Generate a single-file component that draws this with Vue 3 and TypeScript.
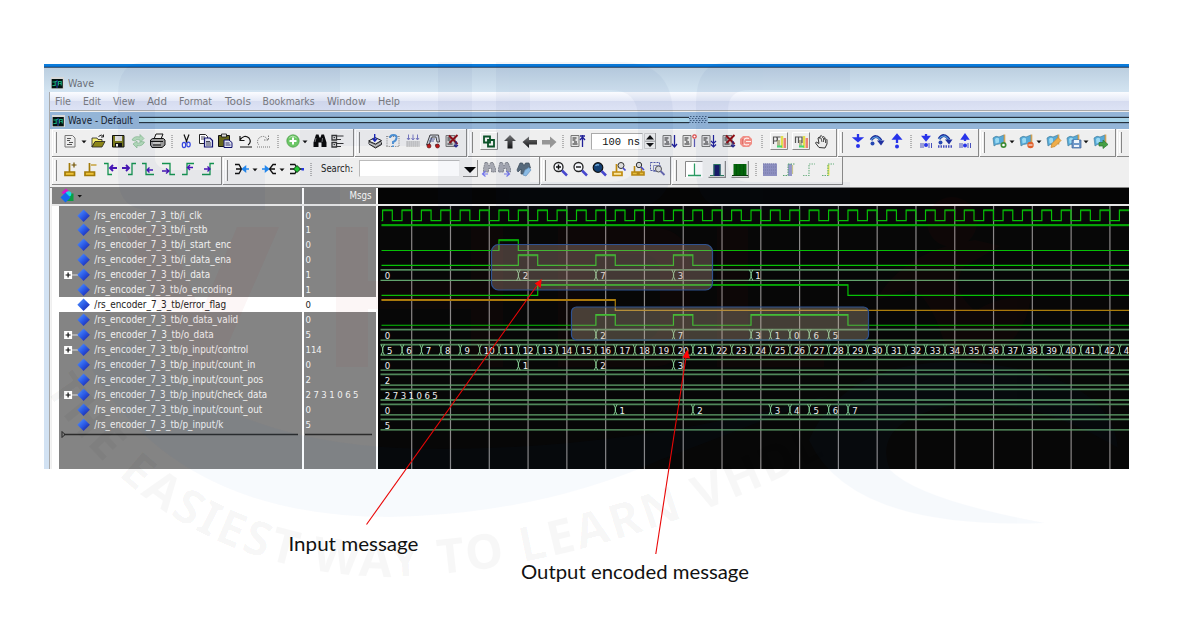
<script setup lang="ts">
interface Tool { icon: string; c: number; w?: number }
interface Group { start: number; end: number; tools: Tool[] }
interface Change { at: number; v: string }
interface Signal {
  name: string
  nameWidth: number
  value: string
  expand?: boolean
  selected?: boolean
  kind: 'bit' | 'bus'
  color?: string
  level?: number
  toggles?: number[]
  first?: string
  changes?: Change[]
}

const t = (icon: string, c: number, w?: number): Tool => ({ icon, c, w })
const row1: Group[] = [
  { start: 52, end: 354, tools: [t('doc', 70), t('caret', 84, 6), t('open', 98), t('save', 118), t('refresh', 137.5), t('print', 157), t('sep', 172, 4), t('cut', 186), t('copy', 206), t('paste', 225), t('undo', 244.5), t('redo', 263), t('sep', 278, 4), t('plus', 292.5), t('caret', 305, 6), t('find', 319.5), t('tree', 338)] },
  { start: 355, end: 467, tools: [t('stack', 374.5), t('ask', 393), t('rain', 413), t('car', 432.5), t('docx', 452)] },
  { start: 468, end: 837, tools: [t('link', 489), t('up', 510), t('left', 529.5), t('right', 549), t('sep', 563, 4), t('docup', 578), t('time', 617, 52), t('spin', 650, 12), t('docdown', 670), t('doccirc', 689.5), t('docdd', 709), t('docx', 729), t('stop', 746), t('sep', 762, 4), t('profp', 779), t('profm', 801), t('hand', 822)] },
  { start: 838, end: 978.5, tools: [t('stepin', 858), t('stepover', 876.5), t('stepout', 897), t('sep', 911, 4), t('stepin2', 926), t('stepover2', 945), t('stepout2', 964.5)] },
  { start: 979.5, end: 1115.5, tools: [t('bmadd', 999.5), t('caret', 1012, 6), t('bmdel', 1027), t('caret', 1039, 6), t('bmedit', 1054), t('bmsave', 1074), t('caret', 1086, 6), t('bmgo', 1101)] },
  { start: 1116.5, end: 1134, tools: [] },
]
const row2: Group[] = [
  { start: 52, end: 222, tools: [t('curadd', 71), t('curdel', 90.5), t('edgeprev', 111), t('edgenext', 129), t('fallprev', 149), t('fallnext', 168), t('riseprev', 188), t('risenext', 207.5)] },
  { start: 223, end: 539.5, tools: [t('drv', 242), t('caret', 255, 6), t('rdr', 269), t('caret', 282, 6), t('con', 297), t('sep', 311, 4), t('label', 338, 34), t('search', 409.5, 101), t('drop', 470.5, 15), t('findl', 488), t('findr', 504), t('findo', 524)] },
  { start: 540.5, end: 671, tools: [t('zin', 560), t('zout', 580), t('zfull', 599), t('zcur', 619), t('zcurs', 638), t('zrange', 657)] },
  { start: 672, end: 843, tools: [t('w1', 693.5), t('w2', 717), t('w3', 740), t('sep', 756, 4), t('w4', 770), t('w5', 789.5), t('w6', 808.5), t('w7', 828)] },
]
const toolbars = [row1, row2]
const width = (x: Tool) => x.w ?? 18
function toolStyle(g: Group, i: number) {
  const x = g.tools[i]
  const prev = i ? g.tools[i - 1].c + width(g.tools[i - 1]) / 2 : g.start
  return { width: width(x) + 'px', marginLeft: x.c - width(x) / 2 - prev + 'px' }
}

const menus: [string, number, number][] = [
  ['File', 55, 16], ['Edit', 83, 18], ['View', 113, 22], ['Add', 147, 20], ['Format', 179, 33],
  ['Tools', 225, 26], ['Bookmarks', 262.5, 52], ['Window', 327, 39], ['Help', 378, 22],
]

const p = '/rs_encoder_7_3_tb/'
const ch = (...a: [number, string][]): Change[] => a.map(([at, v]) => ({ at, v }))
const signals: Signal[] = [
  { name: p + 'i_clk', nameWidth: 107.5, value: '0', kind: 'bit', level: 0, toggles: Array.from({ length: 77 }, (_, i) => 5 + i / 2) },
  { name: p + 'i_rstb', nameWidth: 113, value: '1', kind: 'bit', level: 1, toggles: [] },
  { name: p + 'i_start_enc', nameWidth: 137, value: '0', kind: 'bit', level: 0, toggles: [11, 12] },
  { name: p + 'i_data_ena', nameWidth: 137, value: '0', kind: 'bit', level: 0, toggles: [12, 13, 16, 17, 20, 21] },
  { name: p + 'i_data', nameWidth: 116, value: '1', expand: true, kind: 'bus', first: '0', changes: ch([12, '2'], [16, '7'], [20, '3'], [24, '1']) },
  { name: p + 'o_encoding', nameWidth: 138, value: '1', kind: 'bit', level: 0, toggles: [13, 29] },
  { name: p + 'error_flag', nameWidth: 132, value: '0', selected: true, kind: 'bit', color: '#ab7d0c', level: 1, toggles: [17] },
  { name: p + 'o_data_valid', nameWidth: 144, value: '0', kind: 'bit', level: 0, toggles: [16, 17, 20, 21, 24, 29] },
  { name: p + 'o_data', nameWidth: 119.5, value: '5', expand: true, kind: 'bus', first: '0', changes: ch([16, '2'], [20, '7'], [24, '3'], [25, '1'], [26, '0'], [27, '6'], [28, '5']) },
  { name: p + 'p_input/control', nameWidth: 154, value: '114', expand: true, kind: 'bus', changes: Array.from({ length: 39 }, (_, i) => ({ at: 5 + i, v: i === 38 ? '4' : String(5 + i) })) },
  { name: p + 'p_input/count_in', nameWidth: 161, value: '0', kind: 'bus', first: '0', changes: ch([12, '1'], [16, '2'], [20, '3']) },
  { name: p + 'p_input/count_pos', nameWidth: 169, value: '2', kind: 'bus', first: '2', changes: [] },
  { name: p + 'p_input/check_data', nameWidth: 173, value: '2 7 3 1 0 6 5', expand: true, kind: 'bus', first: '2 7 3 1 0 6 5', changes: [] },
  { name: p + 'p_input/count_out', nameWidth: 168, value: '0', kind: 'bus', first: '0', changes: ch([17, '1'], [21, '2'], [25, '3'], [26, '4'], [27, '5'], [28, '6'], [29, '7']) },
  { name: p + 'p_input/k', nameWidth: 129, value: '5', kind: 'bus', first: '5', changes: [] },
]

const PITCH = 14.95
const END = 751
const slot = (n: number) => 4.6 + (n - 5) * 19.39
const top = (i: number) => i * PITCH + 4
const low = (i: number) => top(i) + 10.6
const grid = Array.from({ length: 19 }, (_, i) => 33.7 + i * 38.79)

function bitPath(s: Signal, i: number): string {
  let high = s.level === 1
  const y = () => (high ? top(i) : low(i))
  let d = `M3.5 ${y()}`
  for (const at of s.toggles ?? []) {
    d += `H${slot(at)}`
    high = !high
    d += `V${y()}`
  }
  return d + `H${END}`
}
function highPath(s: Signal, i: number): string {
  let high = s.level === 1
  let from = 3.5
  let d = ''
  for (const at of [...(s.toggles ?? []), 100]) {
    const to = Math.min(END, slot(at))
    if (high) d += `M${from} ${top(i) + 0.6}H${to}`
    from = to
    high = !high
  }
  return d
}
function crossPath(s: Signal, i: number): string {
  const a = top(i)
  const b = low(i)
  return (s.changes ?? [])
    .map(({ at }) => {
      const x = slot(at)
      return `M${x - 1.6} ${a}L${x} ${a + 3.5}V${b - 3.5}L${x - 1.6} ${b}M${x + 1.8} ${a}L${x + 0.2} ${a + 3.5}V${b - 3.5}L${x + 1.8} ${b}`
    })
    .join('')
}
</script>

<template>
  <div class="page">
    <svg class="defs" width="0" height="0">
      <defs>
        <linearGradient id="gem" x1="0" y1="0" x2="1" y2="1">
          <stop offset="0" stop-color="#5b9bff" /><stop offset=".5" stop-color="#2a5be8" /><stop offset="1" stop-color="#1c1c98" />
        </linearGradient>
        <linearGradient id="dark" x1="0" y1="0" x2="0" y2="1">
          <stop offset="0" stop-color="#777" /><stop offset="1" stop-color="#111" />
        </linearGradient>
        <symbol id="wave" viewBox="0 0 14 12" preserveAspectRatio="none"><rect width="14" height="12" fill="#d8d8d8" /><rect x=".7" y="2" width="12" height="9.3" fill="#03120f" /><path d="M1.5 8.5h3v-4h2M1.500 5h2.500M8 8.500V4.500h3v4M9 6.500h2" fill="none" stroke="#18a878" stroke-width="1.200" /><path d="M6.500 3v8" stroke="#2a48b0" /></symbol>
        <symbol id="page" viewBox="0 0 18 18"><path d="M4 3.500h8v11H4z" fill="#e4e4e4" stroke="#777" /><path d="M5.500 6h4M5.500 8h3M7 10h3M5.500 12h5" stroke="#222" /></symbol>
        <symbol id="doc" viewBox="0 0 18 18"><path d="M4 3.500h7.500l2.500 2.500v9H4z" fill="#eee" stroke="#777" /><path d="M6 6.500h4M6 8.500h3M8 10.500h4M6 12.500h5" stroke="#555" /></symbol>
        <symbol id="open" viewBox="0 0 18 18"><path d="M3 6h5l1 1.500h4V10H6l-3 5z" fill="#f6ef72" stroke="#222" stroke-width=".8" /><path d="M3 15l3-5.500h10L13 15z" fill="#8c8618" stroke="#222" stroke-width=".8" /><path d="M9.500 4.500q3-3 5 0m0-2v2.500h-2.500" fill="none" stroke="#222" /></symbol>
        <symbol id="save" viewBox="0 0 18 18"><path d="M3.500 3.500h11.500v11.500H3.500z" fill="#77771c" stroke="#111" /><path d="M6 4h7v5H6z" fill="#ddd" /><path d="M6 11h7v4H6z" fill="#111" /><path d="M7 12h2v2.500H7z" fill="#eee" /></symbol>
        <symbol id="refresh" viewBox="0 0 18 18"><path d="M3 8Q5 3.500 11 5V2.500l4 4-4 4V8Q7 6.500 6 9z" fill="#b6dcbb" stroke="#86ba91" stroke-width=".7" /><path d="M15.500 10Q13 15 8 13.500V16l-4-4 4-3v2Q11 12 12 9.500z" fill="#b6dcbb" stroke="#86ba91" stroke-width=".7" /></symbol>
        <symbol id="print" viewBox="0 0 18 18"><path d="M6 7l2-5h7l-2 5z" fill="#eee" stroke="#111" /><path d="M2.500 8l2-1.500h11L17 8v5l-3 2.500H4L2.500 13z" fill="#999" stroke="#111" /><path d="M3 9.500h12M5 13h8" stroke="#111" /><path d="M5 11h7" stroke="#eee" /></symbol>
        <symbol id="cut" viewBox="0 0 18 18"><path d="M7 2.500l3 8M12 2.500l-3 8" stroke="#111" fill="none" stroke-width="1.200" /><ellipse cx="7" cy="13" rx="1.700" ry="2.600" fill="none" stroke="#3546e0" stroke-width="1.200" /><ellipse cx="11.500" cy="12.500" rx="1.700" ry="2.400" fill="none" stroke="#3546e0" stroke-width="1.200" /></symbol>
        <symbol id="copy" viewBox="0 0 18 18"><path d="M2.500 2.500h6l2 2v7h-8z" fill="#fff" stroke="#222" /><path d="M7.500 6h5.500l2.500 2.500v6.500h-8z" fill="#dfe2f2" stroke="#11116e" stroke-width="1.200" /><path d="M4 5h4M4 7h3M9 9.500h4M9 11h5M9 13h5" stroke="#445" /></symbol>
        <symbol id="paste" viewBox="0 0 18 18"><path d="M2.500 3.500h11v11h-11z" fill="#66661c" stroke="#111" /><path d="M5.500 2h5v3h-5z" fill="#ddd" stroke="#111" stroke-width=".8" /><path d="M8 8h5l3 2.500v5H8z" fill="#dfe2f2" stroke="#11116e" /><path d="M9.500 11h4M9.500 13h5" stroke="#336" /></symbol>
        <symbol id="undo" viewBox="0 0 18 18"><path d="M4 4v4.500h4.500M4 8q4-6 9-2 3 4-1 7" fill="none" stroke="#111" stroke-width="1.200" /><path d="M4 15h12" stroke="#111" /></symbol>
        <symbol id="redo" viewBox="0 0 18 18"><path d="M14.500 3.500V8h-4.500M14 8q-4-6-9-2-3 4 0 7" fill="none" stroke="#777" stroke-dasharray="1.500 1" /><path d="M3 15h13" stroke="#777" stroke-dasharray="1 1" /></symbol>
        <symbol id="plus" viewBox="0 0 18 18"><circle cx="9" cy="9" r="6.200" fill="#6cc765" stroke="#489a45" stroke-width=".7" /><path d="M5.200 6q3.500-3.500 7.500 0" stroke="#b8e6b0" fill="none" /><path d="M9 5.500v7M5.500 9h7" stroke="#fff" stroke-width="2" /></symbol>
        <symbol id="find" viewBox="0 0 18 18"><path d="M5 2.500h2.500l1 3h1l1-3H13l2.500 8V15h-5v-4.500h-3V15h-5v-4.500z" fill="#0a0a0a" /><path d="M5 6l-1 4M11.500 6l-.5 4" stroke="#aaa" stroke-width=".7" /></symbol>
        <symbol id="tree" viewBox="0 0 18 18"><path d="M3 3.500h4.500v4.500H3zM3 10.500h4.500V15H3z" fill="none" stroke="#333" stroke-width="1.300" /><path d="M8 4h6.500M8 7.500h4M8 11.500h6.500M8 14.500h4" stroke="#333" stroke-width="1.200" /><path d="M4.500 5.700h1.500M4.500 12.700h1.500" stroke="#111" /></symbol>
        <symbol id="stack" viewBox="0 0 18 18"><path d="M3 12v-2l6-3 6.500 3v2.500L9.500 16z" fill="#888" stroke="#222" /><path d="M2.500 9L9 5.500l6.500 3L9.500 12z" fill="#f4f4f4" stroke="#222" /><path d="M3 11l6.500 3 6-3.500" stroke="#eee" fill="none" stroke-width=".8" /><path d="M8.700 2v7M6.500 6.500l2.300 2.700L11 6.500" stroke="#1b27b8" fill="none" stroke-width="1.400" /></symbol>
        <symbol id="ask" viewBox="0 0 18 18"><path d="M2.500 4.500h13M2.500 14.500h13M3 4v11M15 4v11" stroke="#777" stroke-dasharray="1 1.200" /><path d="M6 6q0-3 3.500-3t3 3-3.500 4v2M9 13.500V15" stroke="#4e92d5" fill="none" stroke-width="1.900" /></symbol>
        <symbol id="rain" viewBox="0 0 18 18"><path d="M4.500 2.500v5M9 2.500v5M13.500 2.500v5M3 6l1.500 2L6 6M7.500 6L9 8l1.500-2M12 6l1.500 2L15 6" stroke="#7778c0" fill="none" stroke-width="1" /><path d="M2.500 10h13M2.500 12h13M2.500 14h13" stroke="#777" stroke-dasharray="1.200 .8" /></symbol>
        <symbol id="car" viewBox="0 0 18 18"><path d="M6 3h8.500l1 7H13l-1-5H8l-3 8H2.500z" fill="#d4d8e0" stroke="#444" /><path d="M6 7h5M5 9h5" stroke="#5b67a0" /><path d="M3 13h3M11 13h4" stroke="#222" /><circle cx="5" cy="14" r="2" fill="#c01818" stroke="#511" stroke-width=".6" /><circle cx="13.500" cy="14" r="2" fill="#c01818" stroke="#511" stroke-width=".6" /></symbol>
        <symbol id="docx" viewBox="0 0 18 18"><path d="M3 3.500h9v11H3z" fill="#ccc" stroke="#777" /><path d="M4.500 6h4M4.500 8h3M6 10h3M4.500 12h5" stroke="#222" /><path d="M6 3.500l8.500 8.500M14.500 3L6.500 11" stroke="#8e0d14" stroke-width="1.900" /><path d="M13 9v6M11 13l2 2 2-2" stroke="#26268a" fill="none" stroke-width="1.200" /></symbol>
        <symbol id="link" viewBox="0 0 18 18"><path d="M.5 17.500V.5h17" fill="none" stroke="#fff" /><path d="M17.500.5v17H.5" fill="none" stroke="#888" /><path d="M4 4.500h6v6H4zM8 8h6v6.500H8z" fill="none" stroke="#0c5228" stroke-width="1.800" /></symbol>
        <symbol id="up" viewBox="0 0 18 18"><path d="M9 3l6 6h-3.500v7.500h-5V9H3z" fill="url(#dark)" /></symbol>
        <symbol id="left" viewBox="0 0 18 18"><path d="M1.500 10L8 4.500V8h8v4.500H8V16z" fill="url(#dark)" /></symbol>
        <symbol id="right" viewBox="0 0 18 18"><path d="M16.500 10L10 4.500V8H2v4.500h8V16z" fill="#969696" /></symbol>
        <symbol id="docup" viewBox="0 0 18 18"><use href="#page" x="-2" /><path d="M13.500 3v12M11 4h5M11 8l2.500-3L16 8" stroke="#202098" fill="none" stroke-width="1.300" /></symbol>
        <symbol id="docdown" viewBox="0 0 18 18"><use href="#page" x="-2" /><path d="M13.500 3v11M11 12l2.500 3 2.500-3" stroke="#202098" fill="none" stroke-width="1.300" /></symbol>
        <symbol id="doccirc" viewBox="0 0 18 18"><use href="#page" x="-2" /><path d="M13.500 7v8" stroke="#5a5ab0" stroke-width="1.300" /><circle cx="13.500" cy="4.500" r="1.700" fill="#fff" stroke="#d94343" stroke-width="1.200" /></symbol>
        <symbol id="docdd" viewBox="0 0 18 18"><use href="#page" x="-2" /><path d="M13.500 3v11M11 9l2.500 2.500L16 9M11 12.500l2.500 2.500 2.500-2.500" stroke="#202098" fill="none" stroke-width="1.200" /></symbol>
        <symbol id="stop" viewBox="0 0 18 18"><path d="M6 4h6l3 3v5l-3 3H6l-3-3V7z" fill="#f08e86" /><path d="M12 6.500q-5-1.500-5.500 3t5.500 3M9 9.500h5" stroke="#fff0ee" fill="none" stroke-width="1.200" /><path d="M6 7v5" stroke="#d84e47" /></symbol>
        <symbol id="bars" viewBox="0 0 18 18"><path d="M.5 17.500V.5h17" fill="none" stroke="#fff" /><path d="M17.500.5v17H.5" fill="none" stroke="#888" /><path d="M8.500 8v7" stroke="#b7b790" stroke-width="3" /><path d="M12 4v12" stroke="#e2df4d" stroke-width="2.500" /><path d="M14.800 6v10" stroke="#ec8274" stroke-width="2.500" /><path d="M7 14.500h5" stroke="#45d775" stroke-width="2" /></symbol>
        <symbol id="profp" viewBox="0 0 18 18"><use href="#bars" /><path d="M3.500 12V5h3q2 2 0 4h-3M6.500 5h4" fill="none" stroke="#555" stroke-width="1.200" /></symbol>
        <symbol id="profm" viewBox="0 0 18 18"><use href="#bars" /><path d="M3.500 11V5h3v6M6.500 5h3.500v6" fill="none" stroke="#555" stroke-width="1.200" /></symbol>
        <symbol id="hand" viewBox="0 0 18 18"><path d="M6 15.500L2.500 11q.5-2 2.500 0l1 .5L5 6q1.500-2 2 .5V4.500q1.500-2 2.200 0l.3 1q1.500-2 2.200 0v2q1.500-1.500 2.300.3V12l-2 4z" fill="#ececec" stroke="#333" /><path d="M8 6l1 4M10.500 6v4M12.500 8v3" stroke="#555" /></symbol>
        <symbol id="stepin" viewBox="0 0 18 18"><path d="M9 2v6M6 6.500h6L9 9z" fill="#2733ea" stroke="#2733ea" stroke-width="2.300" /><circle cx="9" cy="14" r="2" fill="#2733ea" /></symbol>
        <symbol id="stepover" viewBox="0 0 18 18"><path d="M3 8Q8 1 13 8.500" fill="none" stroke="#1d2e9b" stroke-width="3" /><path d="M3 8Q8 1.500 13 9" fill="none" stroke="#57a4df" stroke-width="1.200" /><path d="M9 8.500h7.500L13 13.500z" fill="#20309f" /><circle cx="4.500" cy="11.500" r="2" fill="#2546b3" /></symbol>
        <symbol id="stepout" viewBox="0 0 18 18"><path d="M9 11V6M6 6.500h6L9 3z" fill="#2733ea" stroke="#2733ea" stroke-width="2.300" /><circle cx="9" cy="14.500" r="2" fill="#2733ea" /></symbol>
        <symbol id="stepin2" viewBox="0 0 18 18"><path d="M9 2v4M6.500 5h5L9 8z" fill="#2733ea" stroke="#2733ea" stroke-width="2.300" /><circle cx="9" cy="13" r="2" fill="#2733ea" /><path d="M4 11v5M6 11v5M12 11v5M14.500 11v5" stroke="#4851bc" /></symbol>
        <symbol id="stepover2" viewBox="0 0 18 18"><use href="#stepover" y="-1" /><path d="M2 14.500h14" stroke="#4851bc" stroke-width="2.500" stroke-dasharray="1.500 1" /></symbol>
        <symbol id="stepout2" viewBox="0 0 18 18"><path d="M9 9V6M6.500 6.500h5L9 3z" fill="#2733ea" stroke="#2733ea" stroke-width="2.300" /><circle cx="9" cy="13.500" r="2" fill="#2733ea" /><path d="M4 11v5M6 11v5M12 11v5M14.500 11v5" stroke="#4851bc" /></symbol>
        <symbol id="flag" viewBox="0 0 18 18"><path d="M2 6q3-3 6-1l5-2v8l-5 1q-3 0-5 2z" fill="#55a9d8" stroke="#47819e" stroke-width=".7" /><path d="M4 7q2-2 4-.5v4l-3.500 1z" fill="#9ad9f2" /><path d="M13.500 2.500v10" stroke="#d0a256" stroke-width="1.600" /></symbol>
        <symbol id="bmadd" viewBox="0 0 18 18"><use href="#flag" /><circle cx="12.500" cy="13" r="2.200" fill="#fff" stroke="#3d8c36" stroke-width="1.700" /></symbol>
        <symbol id="bmdel" viewBox="0 0 18 18"><use href="#flag" /><circle cx="12.500" cy="13" r="3.200" fill="#e0612c" /><path d="M10.500 13h4" stroke="#fff" /></symbol>
        <symbol id="bmedit" viewBox="0 0 18 18"><use href="#flag" /><path d="M6 15.500l1-4 6-6 3 3-6 6z" fill="#efad49" stroke="#c58428" stroke-width=".7" /></symbol>
        <symbol id="bmsave" viewBox="0 0 18 18"><use href="#flag" /><path d="M7 8h9v8H7z" fill="#7098c8" stroke="#395e98" stroke-width=".7" /><path d="M9 8h5v3H9zM9 13h5v2H9z" fill="#eef4fb" /></symbol>
        <symbol id="bmgo" viewBox="0 0 18 18"><use href="#flag" /><path d="M7 10.500h4V8l5 4.500-5 4V14H7z" fill="#46a044" stroke="#2b762e" stroke-width=".7" /></symbol>
        <symbol id="sep" viewBox="0 0 4 18"><path d="M2 3v13" stroke="#777" stroke-dasharray="1 1" /></symbol>
        <symbol id="caret" viewBox="0 0 6 18"><path d="M.5 8.500h5L3 11.300z" fill="#111" /></symbol>
        <symbol id="spin" viewBox="0 0 12 18"><path d="M.5 1.500h11v15H.5z" fill="#eee" stroke="#ccc" /><path d="M2 7.500h8L6 3zM2 11h8l-4 4z" fill="#111" /><path d="M1 9.200h10M11.500 1v16" stroke="#999" /></symbol>

        <symbol id="curadd" viewBox="0 0 18 18"><path d="M7.500 3v9h5v3.500H3V12h4.500" fill="#edc33a" stroke="#a27b08" stroke-width="1.700" /><path d="M12 2.500v5M9.500 5h5" stroke="#705200" stroke-width="1.200" /></symbol>
        <symbol id="curdel" viewBox="0 0 18 18"><path d="M7.500 3v9h5v3.500H3V12h4.500" fill="#edc33a" stroke="#a27b08" stroke-width="1.700" /><path d="M9 5h5.500" stroke="#bb8e10" stroke-width="1.200" /></symbol>
        <symbol id="edgeprev" viewBox="0 0 18 18"><path d="M2 3.500h4v11h4" fill="none" stroke="#14924f" stroke-width="1.300" /><path d="M15 8H8M11 5L8 8l3 3" fill="none" stroke="#4716b5" stroke-width="1.900" /></symbol>
        <symbol id="edgenext" viewBox="0 0 18 18"><path d="M8 14.500h4v-11h4" fill="none" stroke="#14924f" stroke-width="1.300" /><path d="M2 8h7M6 5l3 3-3 3" fill="none" stroke="#4716b5" stroke-width="1.900" /></symbol>
        <symbol id="fallprev" viewBox="0 0 18 18"><path d="M2 3.500h4v11h8" fill="none" stroke="#14924f" stroke-width="1.300" /><path d="M13 10H7M9.500 7.500L7 10l2.500 2.500" fill="none" stroke="#4716b5" stroke-width="1.400" /></symbol>
        <symbol id="fallnext" viewBox="0 0 18 18"><path d="M3 3.500h8v11h5" fill="none" stroke="#14924f" stroke-width="1.300" /><path d="M3 11h7M7 8.500l3 2.500-3 2.500" fill="none" stroke="#4716b5" stroke-width="1.400" /></symbol>
        <symbol id="riseprev" viewBox="0 0 18 18"><path d="M3 14.500h5v-11h7" fill="none" stroke="#14924f" stroke-width="1.300" /><path d="M14 7.500H8.500M11 5L8.500 7.500 11 10" fill="none" stroke="#4716b5" stroke-width="1.400" /></symbol>
        <symbol id="risenext" viewBox="0 0 18 18"><path d="M3 14.500h8v-11h4" fill="none" stroke="#14924f" stroke-width="1.300" /><path d="M5 9h6M8.500 6.500L11 9l-2.500 2.500" fill="none" stroke="#4716b5" stroke-width="1.400" /></symbol>
        <symbol id="drv" viewBox="0 0 18 18"><path d="M2 4.500h4l2.500 4.500L6 13.500H2M3 9h5" fill="none" stroke="#111" stroke-width="1.300" /><path d="M16 9h-6M12.500 6.500L9.500 9l3 2.500z" fill="#2387ed" stroke="#2387ed" stroke-width="1.500" /></symbol>
        <symbol id="rdr" viewBox="0 0 18 18"><path d="M16 4.500h-3l-3.500 4.500 3.500 4.500h3M10 9h5" fill="none" stroke="#111" stroke-width="1.300" /><path d="M2 9h6M5.500 6.500L8.500 9l-3 2.500z" fill="#2387ed" stroke="#2387ed" stroke-width="1.500" /></symbol>
        <symbol id="con" viewBox="0 0 18 18"><path d="M2 4.500h5q3 4.500 0 9H2M2 9h13" fill="none" stroke="#111" stroke-width="1.300" /><path d="M9 5.500L12.500 9 9 12.500 5.500 9z" fill="#22c733" stroke="#0a3b10" /><path d="M13.500 8h2.500v2.500h-2.500z" fill="#2436e6" /></symbol>
        <symbol id="findgray" viewBox="0 0 18 18"><path d="M5 2.500h2.500l1 3h1l1-3H13l2.500 6V12h-4V8.500h-3V12h-5V8.500z" fill="#a6a8b1" stroke="#737780" stroke-width=".8" stroke-dasharray="2 .6" /></symbol>
        <symbol id="findl" viewBox="0 0 18 18"><use href="#findgray" x="1" /><path d="M9 14H4M6.500 11L3.500 14l3 2.500" stroke="#7477ed" fill="none" stroke-width="1.200" /></symbol>
        <symbol id="findr" viewBox="0 0 18 18"><use href="#findgray" /><path d="M9 14h5M11.500 11l3 3-3 2.500" stroke="#7477ed" fill="none" stroke-width="1.200" /></symbol>
        <symbol id="findo" viewBox="0 0 18 18"><path d="M5 3h2.500l1 2h1l1-2H14l1.500 5-6 2-.5 4H6V9L3 12 2 10z" fill="#596c7c" stroke="#3a4855" stroke-width=".7" /><path d="M8 15l2-5 4-2.500 2 2.500-5 6z" fill="#8fc0e9" stroke="#6794bd" stroke-width=".7" /></symbol>
        <symbol id="zin" viewBox="0 0 18 18"><circle cx="7.500" cy="7" r="4.500" fill="#f4f6fa" stroke="#222" stroke-width="1.300" /><path d="M11 10.500l5 5" stroke="#4647cd" stroke-width="2.500" /><path d="M5 7h5M7.500 4.500v5" stroke="#111" stroke-width="1.400" /></symbol>
        <symbol id="zout" viewBox="0 0 18 18"><circle cx="7.500" cy="7" r="4.500" fill="#f4f6fa" stroke="#222" stroke-width="1.300" /><path d="M11 10.500l5 5" stroke="#4647cd" stroke-width="2.500" /><path d="M5 7h5" stroke="#111" stroke-width="1.400" /></symbol>
        <symbol id="zfull" viewBox="0 0 18 18"><circle cx="8" cy="7.500" r="4.800" fill="#123f73" stroke="#111" stroke-width="1.200" /><path d="M5.500 6q1-2 3.500-1" stroke="#6fa9d9" fill="none" stroke-width="1.400" /><path d="M11.500 11l4.500 4.500" stroke="#4647cd" stroke-width="2.500" /></symbol>
        <symbol id="zcur" viewBox="0 0 18 18"><path d="M6.500 4v8H12v3.500H3V12h3.500" fill="#fbe7a0" stroke="#c08c10" stroke-width="1.700" /><circle cx="11" cy="5.500" r="3" fill="#ddd" stroke="#333" /><path d="M13 8l2.500 2.500" stroke="#4647cd" stroke-width="1.700" /></symbol>
        <symbol id="zcurs" viewBox="0 0 18 18"><path d="M5.500 6v6h3v3H3v-3h2.500M12.500 8v4H15v3h-5v-3h2.500" fill="#edc33a" stroke="#bd8a10" stroke-width="1.600" /><circle cx="10" cy="5" r="2.700" fill="#ddd" stroke="#333" /><path d="M12 7l3 3" stroke="#4647cd" stroke-width="1.600" /></symbol>
        <symbol id="zrange" viewBox="0 0 18 18"><path d="M2.500 2.500h9v8h-9z" fill="none" stroke="#5159a8" stroke-dasharray="2 1" /><path d="M5.500 5.500h7v6h-7z" fill="none" stroke="#8c91c2" /><circle cx="10.500" cy="9" r="3" fill="#ddd" stroke="#555" /><path d="M12.500 11l4 4" stroke="#6667ae" stroke-width="1.800" /></symbol>
        <symbol id="w1" viewBox="0 0 18 18"><path d="M.5 1.500h17v16H.5z" fill="#fff" /><path d="M.5 17V1.500h17" fill="none" stroke="#888" /><path d="M3 15.500h13M9.500 3.500v12" stroke="#2b9b63" stroke-width="1.300" /></symbol>
        <symbol id="w2" viewBox="0 0 18 18"><path d="M17.500 1v16.500H.5" fill="none" stroke="#888" stroke-width="1.500" /><path d="M5.500 4h7v12h-7z" fill="#191968" /><path d="M2 15.500h4V4.500h6v11h4" fill="none" stroke="#287b5c" /></symbol>
        <symbol id="w3" viewBox="0 0 18 18"><path d="M17.500 1v16.500H.5" fill="none" stroke="#888" stroke-width="1.500" /><path d="M2.500 4h13v12h-13z" fill="#046409" /><path d="M5.500 4v12M9 4v12M12.500 4v12" stroke="#03500a" stroke-width=".8" /><path d="M1 15.500h16" stroke="#033f06" /></symbol>
        <symbol id="w4" viewBox="0 0 18 18"><path d="M2 3.500h14v12.500H2z" fill="#8d8fc0" /><path d="M2 4h14M2 7h14M2 10h14M2 13h14" stroke="#777ba8" stroke-dasharray="1 1" /></symbol>
        <symbol id="w5" viewBox="0 0 18 18"><path d="M7 4h4v12H7z" fill="#9496c9" /><path d="M2 15.500h5v-11M7 4h7" fill="none" stroke="#55a26f" stroke-dasharray="1.500 1" /><path d="M11.500 5v9" stroke="#c6c48f" stroke-width="1.200" /></symbol>
        <symbol id="w6" viewBox="0 0 18 18"><path d="M3 15.500h6V4h6" fill="none" stroke="#78b58b" stroke-dasharray="1.500 1" stroke-width="1.200" /></symbol>
        <symbol id="w7" viewBox="0 0 18 18"><path d="M9.500 4.500v11" stroke="#e6e64a" stroke-width="1.800" /><path d="M3 15.500h6V4h6" fill="none" stroke="#65af7c" stroke-dasharray="1.500 1" stroke-width="1.200" /></symbol>
      </defs>
    </svg>

    <main class="window">
      <div class="strip"></div>
      <header class="title">
        <svg class="logo" width="13" height="12"><use href="#wave" width="13" height="12" /></svg>
        <svg class="fill" height="24"><text x="4" y="18.500" textLength="26" lengthAdjust="spacingAndGlyphs" class="ui" fill="#6b7078">Wave</text></svg>
      </header>
      <div class="frame">
        <nav class="menu">
          <svg width="400" height="17"><text v-for="m in menus" :key="m[0]" :x="m[1] - 50" y="11.500" :textLength="m[2]" lengthAdjust="spacingAndGlyphs" class="ui" fill="#77797f">{{ m[0] }}</text></svg>
        </nav>
        <div class="dock">
          <svg class="logo" width="13" height="12"><use href="#wave" width="13" height="12" /></svg>
          <svg width="72" height="16"><text x="3" y="11.300" textLength="65" lengthAdjust="spacingAndGlyphs" class="ui" fill="#15202c">Wave - Default</text></svg>
          <div class="rails first"></div>
          <svg class="grip" width="19" height="10"><path d="M1 1.500h18M0 3.500h18M1 5.500h18M0 7.500h18" stroke="#3d5b7c" stroke-dasharray="1.500 1.500" /></svg>
          <div class="rails"></div>
        </div>
        <div class="toolbars">
          <div v-for="(bar, b) in toolbars" :key="b" class="toolbar">
            <div v-for="g in bar" :key="g.start" class="group" :style="{ width: g.end - g.start + 'px' }">
              <i class="handle"></i>
              <template v-for="(x, i) in g.tools" :key="i">
                <div v-if="x.icon === 'time'" class="time" :style="toolStyle(g, i)">100 ns</div>
                <div v-else-if="x.icon === 'search'" class="search" :style="toolStyle(g, i)"></div>
                <div v-else-if="x.icon === 'label'" :style="toolStyle(g, i)"><svg width="34" height="17"><text x="0" y="12" textLength="32" lengthAdjust="spacingAndGlyphs" class="ui" fill="#222">Search:</text></svg></div>
                <div v-else-if="x.icon === 'drop'" class="drop" :style="toolStyle(g, i)"></div>
                <svg v-else height="18" :style="toolStyle(g, i)"><use :href="'#' + x.icon" /></svg>
              </template>
            </div>
          </div>
        </div>
        <section class="panes">
          <div class="heads">
            <div class="head names">
              <svg width="26" height="15"><path d="M3.500 4.500l4.500-4L12 4.500 8 8z" fill="#d813c8" /><path d="M9 5.500h6.500V13H9z" fill="#0a9f42" /><circle cx="10.500" cy="6" r="2.800" fill="#13dfe8" /><path d="M2.500 9.500L7.500 4.500l5 5-5 5z" fill="#1468f0" /><path d="M19.500 7h4.500L21.700 9.500z" fill="#111" /></svg>
            </div>
            <div class="head values"><svg width="71" height="15"><text x="45.500" y="11.300" textLength="22" lengthAdjust="spacingAndGlyphs" class="row-text" fill="#f4f4f4">Msgs</text></svg></div>
            <div class="head scope"></div>
          </div>
          <div class="body">
            <div class="names-pane">
              <div v-for="s in signals" :key="s.name" class="row" :class="{ selected: s.selected }">
                <svg width="243" height="14.950" viewBox="0 0 243 14.950">
                  <g v-if="s.expand"><path d="M13 8h6" stroke="#ddd" /><rect x="5" y="4" width="8" height="8" fill="#fff" /><path d="M9 5.500v5M6.500 8h5" stroke="#111" stroke-width="1.200" /></g>
                  <path d="M24.500 1.500l6.300 6.200-6.300 6.200-6.300-6.200z" fill="url(#gem)" />
                  <text x="35.300" y="11" :textLength="s.nameWidth" lengthAdjust="spacingAndGlyphs" class="row-text" :fill="s.selected ? '#222' : '#f0f0f0'">{{ s.name }}</text>
                </svg>
              </div>
              <svg class="endline" width="243" height="8"><path d="M3 .5l3 3-3 3z" fill="none" stroke="#222" /><path d="M5 3.500h234" stroke="#2b2b2b" stroke-width="1.300" /></svg>
            </div>
            <div class="values-pane">
              <div v-for="s in signals" :key="s.name" class="row" :class="{ selected: s.selected }">
                <svg width="71" height="14.950"><text x="1.500" y="11.200" class="value-text" :textLength="s.value.length > 5 ? 53 : undefined" :fill="s.selected ? '#222' : '#f0f0f0'">{{ s.value }}</text></svg>
              </div>
              <svg class="endline" width="71" height="8"><path d="M1 3.500h67" stroke="#2b2b2b" stroke-width="1.300" /></svg>
            </div>
            <svg class="wave-pane" width="751" height="263" viewBox="0 0 751 263">
              <rect width="751" height="263" fill="#070707" />
              <path v-for="x in grid" :key="x" :d="`M${x} 0V263`" stroke="#8a8888" stroke-width="1.200" />
              <g v-for="(s, i) in signals" :key="s.name">
                <template v-if="s.kind === 'bit'">
                  <path :d="highPath(s, i)" :stroke="s.color ?? '#078a07'" stroke-width="1.500" fill="none" />
                  <path :d="bitPath(s, i)" :stroke="s.color ?? '#06c006'" stroke-width="1.200" fill="none" />
                </template>
                <template v-else>
                  <path :d="`M2.500 ${top(i)}H751`" stroke="#50875a" stroke-width="1.700" />
                  <path :d="`M2.500 ${low(i)}H751`" stroke="#62a36c" stroke-width="1.300" />
                  <path :d="crossPath(s, i)" fill="none" stroke="#8ad69a" stroke-width=".9" />
                  <text v-if="s.first" x="6.800" :y="top(i) + 9.300" class="bus-text" :textLength="s.first.length > 5 ? 53 : undefined">{{ s.first }}</text>
                  <text v-for="c in s.changes" :key="c.at" :x="slot(c.at) + 4.300" :y="top(i) + 9.300" class="bus-text">{{ c.v }}</text>
                </template>
              </g>
            </svg>
          </div>
        </section>
      </div>
    </main>

    <svg class="overlay" width="1200" height="629" viewBox="0 0 1200 629">
      <g fill="#183c88" opacity=".04">
        <path d="M145 62H300V90H165Q155 91 155 105V158Q155 170 175 170H265V210H150Q118 210 118 176V95Q118 62 145 62zM300 62h40v148h-40zM438 62h34v148h-34zM340 118h98v28h-98zM496 62H620Q673 62 673 116V160Q673 210 620 210H496zM530 90V182H610Q638 182 638 155V118Q638 90 610 90z" fill-rule="evenodd" />
        <path d="M728 62H850V90H750Q728 90 728 110V163Q728 182 750 182H850V210H735Q696 210 696 170V103Q696 62 728 62z" />
      </g>
      <g fill="#b01818" opacity=".04">
        <path d="M123 227h43l35 86 36-86h42l-61 140h-34zM336 227h32v54h103v-54h32v140h-32v-58H368v58h-32zM558 227h90q42 0 42 40v60q0 40-42 40h-90zM590 254v86h50q20 0 20-20v-46q0-20-20-20zM717 227h31v113h76v27H717z" fill-rule="evenodd" />
        <circle cx="952" cy="222" r="25" /><path d="M876 300Q905 250 975 240l25 6-35 20q-18 20 10 45 25-16 56-14-5 45-50 65l-34-10q-15-55-35-62z" />
      </g>
      <g fill="#0a62c4" opacity=".03">
        <path d="M92 370Q180 517 390 517 540 514 660 460L830 395Q610 455 400 448 220 440 130 340z" />
        <path d="M809 440Q845 360 960 362 1110 370 1118 448 1030 395 955 405 870 420 890 470 920 500 1045 523 850 530 809 440z" />
      </g>
      <path id="motto" d="M44 388Q170 578 400 577 620 566 856 440" fill="none" />
      <text class="motto"><textPath href="#motto" textLength="868">THE EASIEST WAY TO LEARN VHDL</textPath></text>

      <rect x="491.500" y="244.500" width="221" height="45.500" rx="7" fill="#c8a498" fill-opacity=".32" stroke="#2f528f" stroke-width="1.200" />
      <rect x="571.500" y="307" width="297" height="33" rx="5" fill="#c8b49c" fill-opacity=".32" stroke="#2f528f" stroke-width="1.200" />
      <g stroke="#ea0606" stroke-width="1.100" fill="#ff0505">
        <path d="M366.500 524.500L537 285.500" /><path d="M541.700 279l-1 9-6-4.500z" stroke="none" />
        <path d="M655.800 554L686 357" /><path d="M687.300 349.500l2.700 9-7.500-1z" stroke="none" />
      </g>
      <text x="288.500" y="551" textLength="130" lengthAdjust="spacingAndGlyphs" class="note">Input message</text>
      <text x="521" y="579" textLength="228" lengthAdjust="spacingAndGlyphs" class="note">Output encoded message</text>
    </svg>
  </div>
</template>

<style>
body { margin: 0; background: #fff; }
</style>
<style scoped>
.page { position: relative; width: 1200px; height: 629px; box-sizing: border-box; padding: 64px 0 0 44px; overflow: hidden; background: #fff; font-family: "DejaVu Sans Condensed", "DejaVu Sans", sans-serif; }
.defs { position: absolute; }
svg { display: block; flex: none; }
.window { width: 1085px; height: 405px; overflow: hidden; background: #d2e2f3; }
.strip { height: 4px; background: linear-gradient(#0b7cdb 0 2px, #0866bd 2px 3px, #4b5f76 3px); }
.title { height: 24px; display: flex; background: linear-gradient(#bccfe0, #d3e4f1); }
.title .logo { margin: 9px 0 0 7px; }
.fill { flex: 1; }
.ui { font: 10.500px "DejaVu Sans Condensed", "DejaVu Sans", sans-serif; font-stretch: condensed; }
.row-text { font: 10px "DejaVu Sans Condensed", "DejaVu Sans", sans-serif; font-stretch: condensed; }
.value-text { font: 9.500px "DejaVu Sans Condensed", "DejaVu Sans", sans-serif; font-stretch: condensed; }
.bus-text { font: 9.500px "DejaVu Sans Condensed", "DejaVu Sans", sans-serif; font-stretch: condensed; fill: #f0f0f0; }
.frame { margin-left: 5px; border-left: 1px solid #a8a8a8; box-shadow: inset 1px 0 #f4f4f4; background: #efefef; }
.menu { height: 18px; padding-top: 1px; box-sizing: border-box; background: linear-gradient(#fbfcff 0, #e3e8f6 50%, #d6dcf0 52%, #dde3f5); }
.dock { height: 19px; box-sizing: border-box; border-top: 1px solid #aaa; box-shadow: inset 0 1px #eee; padding: 2px 0 0 2px; display: flex; align-items: flex-start; background: #94b5d7; }
.dock .logo { margin-top: 2px; }
.rails { flex: 1; height: 6px; margin-top: 4px; box-sizing: border-box; border-top: 1px solid #26323e; border-bottom: 1px solid #26323e; background: #a7d3e8; box-shadow: 0 -1px #7f9fbd, 0 1px #7f9fbd; }
.rails.first { flex: 0 0 550px; margin-left: 2px; }
.grip { margin-top: 2px; }
.toolbars { height: 59px; border-bottom: 1px solid #858585; padding-left: 2px; box-sizing: border-box; }
.toolbar { height: 28px; display: flex; gap: 1px; }
.group { position: relative; flex: none; box-sizing: border-box; height: 28px; padding-top: 3px; display: flex; align-items: flex-start; border-right: 1px solid #888; border-bottom: 1px solid #888; box-shadow: inset 1px 1px #fff; }
.group > * { flex: none; }
.handle { position: absolute; left: 2px; top: 3px; width: 1px; height: 21px; border-right: 1px solid #858585; border-left: 1px solid #fff; }
.time { height: 17px; margin-top: 1px; padding-right: 2px; box-sizing: border-box; background: #fff; border: 1px solid #aaa; border-right-color: #ddd; border-bottom-color: #ddd; text-align: right; font: 10.500px/16px "Liberation Mono", monospace; color: #111; }
.search { height: 17px; box-sizing: border-box; background: #fff; border: 1px solid #bbb; border-right-color: #eee; border-bottom-color: #eee; }
.drop { height: 17px; box-sizing: border-box; border-right: 1px solid #888; border-bottom: 1px solid #888; display: flex; }
.drop::after { content: ""; margin: 7px 0 0 1px; border: 6px solid transparent; border-top-color: #050505; border-bottom: 0; }
.panes { margin-left: 2px; background: #fff; }
.heads { display: flex; height: 16px; gap: 2px; border-bottom: 2px solid #e7e7e7; }
.head { background: #828282; }
.names { width: 250px; padding-left: 6px; box-sizing: border-box; }
.values { width: 72px; }
.scope { flex: 1; background: #050505; }
.body { display: flex; gap: 2px; height: 263px; }
.names-pane { width: 243px; margin-left: 7px; background: #848484; }
.values-pane { width: 72px; background: #848484; }
.names-pane, .values-pane { padding-top: 1.500px; box-sizing: border-box; }
.row { height: 14.950px; overflow: hidden; }
.row.selected { background: #fff; }
.endline { margin-top: -.500px; }
.overlay { position: absolute; inset: 0; }
.motto { font: 700 48px "Noto Sans", sans-serif; fill: #000; fill-opacity: .032; }
.note { font: 20px Lato, "Open Sans", sans-serif; fill: #111; }
</style>
